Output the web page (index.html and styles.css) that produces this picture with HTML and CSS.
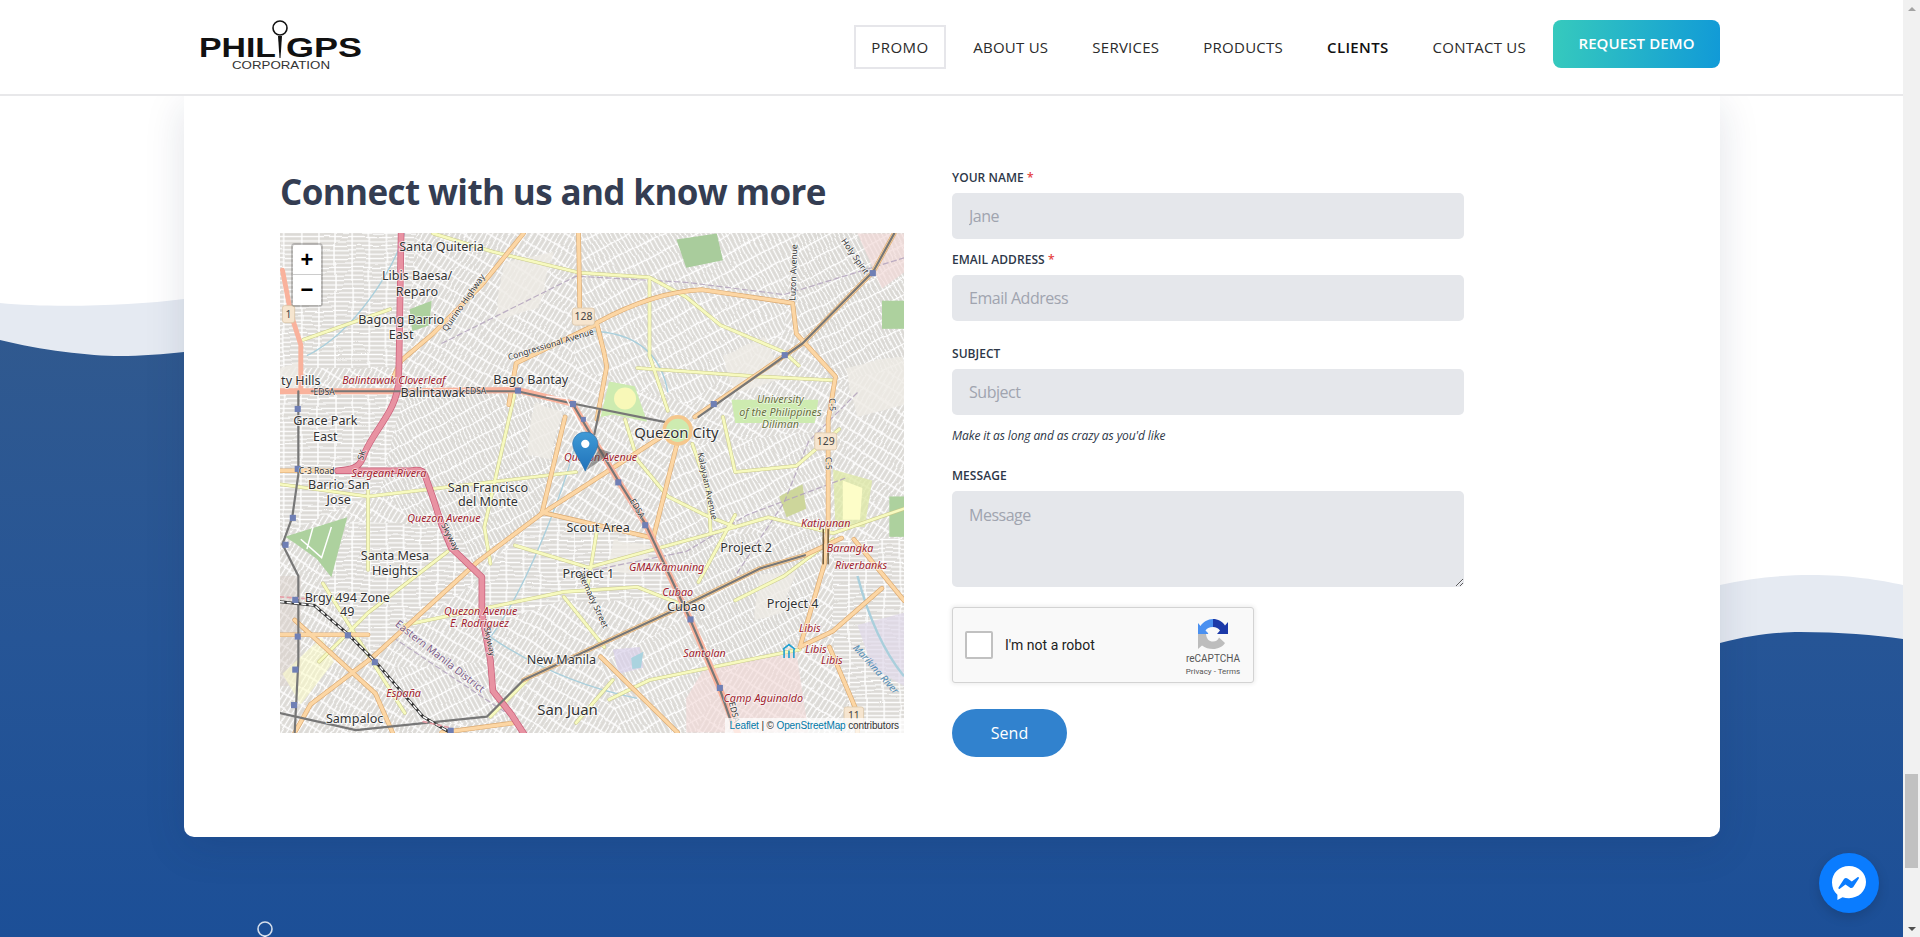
FILE: index.html
```html
<!DOCTYPE html>
<html lang="en">
<head>
<meta charset="utf-8">
<title>PhilGPS Corporation</title>
<link rel="stylesheet" href="styles.css">
</head>
<body>
<div class="window">
  <div class="page">
    <svg class="waves" viewBox="0 0 1903 937" preserveAspectRatio="none" aria-hidden="true">
      <defs>
        <linearGradient id="blue" x1="0" y1="0" x2="0" y2="1">
          <stop offset="0" stop-color="#30598f"/>
          <stop offset="0.5" stop-color="#265596"/>
          <stop offset="1" stop-color="#1c4f97"/>
        </linearGradient>
      </defs>
      <path fill="#e5eaf2" d="M0 303C50 308 130 306 184 299L1720 585C1750 578 1785 575 1810 575C1850 575 1880 580 1903 585V937H0Z"/>
      <path fill="url(#blue)" d="M0 340C40 350 90 356 120 356C140 356 165 354 184 352L1720 643C1750 635 1780 632 1800 632C1840 632 1875 635 1903 639V937H0Z"/>
    </svg>

    <header class="header">
      <a class="logo" href="#">
        <svg width="170" height="60" viewBox="0 0 170 60">
          <text x="0" y="47" class="logo-word" textLength="77" lengthAdjust="spacingAndGlyphs">PHIL</text>
          <circle cx="81" cy="18" r="7" fill="#fff" stroke="#111" stroke-width="1.600"/>
          <path d="M79 26H83L81.500 48H80.500Z" fill="#111"/>
          <text x="87" y="47" class="logo-word" textLength="76" lengthAdjust="spacingAndGlyphs">GPS</text>
          <text x="33" y="59" class="logo-sub" textLength="98" lengthAdjust="spacingAndGlyphs">CORPORATION</text>
        </svg>
      </a>
      <nav class="nav">
        <a class="nav-item nav-boxed" href="#">PROMO</a>
        <a class="nav-item" href="#">ABOUT US</a>
        <a class="nav-item" href="#">SERVICES</a>
        <a class="nav-item" href="#">PRODUCTS</a>
        <a class="nav-item nav-strong" href="#">CLIENTS</a>
        <a class="nav-item" href="#">CONTACT US</a>
        <a class="demo" href="#">REQUEST DEMO</a>
      </nav>
    </header>

    <main class="card">
      <section class="left">
        <h2 class="title">Connect with us and know more</h2>
        <div class="map">
          <svg class="map-svg" viewBox="228 190 510 408" aria-label="Map of Quezon City">
            <defs>
              <pattern id="s1" width="3.600" height="14" patternUnits="userSpaceOnUse" patternTransform="rotate(90)"><rect width="3.600" height="14" fill="#dcdad6"/><path d="M1.800 0V14M0 7H3.600" stroke="#fff" stroke-width="1.100"/></pattern>
              <pattern id="s2" width="3.800" height="11" patternUnits="userSpaceOnUse" patternTransform="rotate(32)"><rect width="3.800" height="11" fill="#dcdad6"/><path d="M1.900 0V11M0 5.500H3.800" stroke="#fff" stroke-width="1.100"/></pattern>
              <pattern id="s3" width="3.400" height="12" patternUnits="userSpaceOnUse" patternTransform="rotate(-28)"><rect width="3.400" height="12" fill="#dad8d4"/><path d="M1.700 0V12M0 6H3.400" stroke="#fff" stroke-width="1"/></pattern>
              <pattern id="s4" width="13" height="3.600" patternUnits="userSpaceOnUse" patternTransform="rotate(62)"><rect width="13" height="3.600" fill="#dcdad6"/><path d="M0 1.800H13M6 0V3.600" stroke="#fff" stroke-width="1.100"/></pattern>
              <linearGradient id="pin" x1="0" y1="0" x2="0" y2="1"><stop offset="0" stop-color="#3f9ad6"/><stop offset="1" stop-color="#1f72ba"/></linearGradient>
              <filter id="wobble" x="0" y="0" width="100%" height="100%" filterUnits="objectBoundingBox">
                <feTurbulence type="fractalNoise" baseFrequency="0.03" numOctaves="2" seed="7" result="n"/>
                <feDisplacementMap in="SourceGraphic" in2="n" scale="5" xChannelSelector="R" yChannelSelector="G"/>
              </filter>
            </defs>

            <rect x="228" y="190" width="510" height="408" fill="#efece6"/>
            <g filter="url(#wobble)">
              <rect x="220" y="180" width="530" height="430" fill="url(#s2)"/>
              <path fill="url(#s1)" d="M220 180H340L330 300H220Z"/>
              <path fill="url(#s2)" d="M340 180H470L470 300L400 320H330Z"/>
              <path fill="url(#s4)" d="M470 180H650L640 270L560 330L500 310L470 300Z"/>
              <path fill="url(#s3)" d="M650 180H750V300L680 310L650 270Z"/>
              <path fill="url(#s1)" d="M220 320H330L310 400L220 440Z"/>
              <path fill="url(#s3)" d="M330 320H465L442 420L380 470L310 400Z"/>
              <path fill="url(#s2)" d="M465 340L540 360L530 440L440 420Z"/>
              <path fill="url(#s4)" d="M555 365L680 350L675 425L600 430L535 440Z"/>
              <path fill="url(#s2)" d="M680 310H750V430L680 430Z"/>
              <path fill="url(#s1)" d="M285 425L370 430L393 470L305 535L260 480Z"/>
              <path fill="url(#s1)" d="M393 470L440 420L530 440L560 490L460 490L395 510Z"/>
              <path fill="url(#s3)" d="M535 440L680 430L655 525L590 550Z"/>
              <path fill="url(#s2)" d="M395 510L500 490L480 540L420 555L400 540Z"/>
              <path fill="url(#s4)" d="M490 540L570 500L590 560L560 610H510Z"/>
              <path fill="url(#s2)" d="M220 500L300 540L250 610H220Z"/>
              <path fill="url(#s4)" d="M320 545L400 540L415 590L340 590Z"/>
              <path fill="url(#s1)" d="M680 440H750V610H700L680 530Z"/>
              <!-- open land between the built-up streets -->
              <g fill="#efece6" opacity=".8">
                <path d="M410 215L450 205L440 250L405 260Z"/>
                <path d="M590 290L625 275L640 310L600 320Z"/>
                <path d="M436 328L460 335L448 375L430 370Z"/>
                <path d="M690 300L738 290V330L700 340Z"/>
                <path d="M500 440L530 445L525 470L495 465Z"/>
                <path d="M228 300L245 295V318H228Z"/>
                <path d="M620 470L650 465L640 500L615 505Z"/>
              </g>
            </g>

            <!-- land use -->
            <path fill="#d9d0c9" opacity=".5" d="M228 470H245V560H228Z"/>
            <path fill="#f2dad9" opacity=".65" d="M575 545L650 532L660 598H560L560 570Z"/>
            <path fill="#f2dad9" opacity=".7" d="M700 190H738V222L720 235Z"/>
            <path fill="#a9cc9c" d="M552 195L585 190L590 212L560 218Z"/>
            <path fill="#add19e" d="M334 252L352 245L350 265L336 270Z"/>
            <path fill="#add19e" d="M720 245H738V268H720Z"/>
            <path fill="#add19e" d="M726 405H738V438H726Z"/>
            <path fill="#add19e" d="M232 438L283 422L270 471L258 456L240 443Z"/>
            <path fill="none" stroke="#fff" stroke-width="1.200" d="M245 440L262 455L270 430M255 430L250 448"/>
            <path fill="#cdebb0" d="M497 311L518 315L528 344L500 338L490 340Z"/>
            <ellipse cx="510" cy="325" rx="9" ry="9" fill="#f8f8b8"/>
            <path fill="#cdebb0" d="M597 326L668 326L665 345L600 345Z"/>
            <path fill="#dfe9a8" opacity=".8" d="M680 383L712 392L706 430L682 430Z"/>
            <path fill="#fdfdc8" d="M688 392L704 398L702 424L688 424Z"/>
            <path fill="#cdd69b" d="M636 405L655 395L658 415L642 422Z"/>
            <path fill="#d8d0ea" opacity=".7" d="M500 530L522 528L525 545L505 550Z"/>
            <path fill="#e0d8ea" opacity=".7" d="M700 510L738 500V560L712 545Z"/>
            <path fill="#fdfdc8" opacity=".55" d="M230 550L262 520L272 540L245 575Z"/>
            <path fill="#aad3df" d="M515 537L525 532L523 545L516 546Z"/>

            <!-- water -->
            <g fill="none" stroke="#a9cfdc" stroke-width="1.100">
              <path d="M330 190C320 220 290 270 250 290"/>
              <path d="M480 270C520 270 540 290 545 320"/>
              <path d="M470 360C460 400 430 480 400 520C430 540 470 560 520 570"/>
              <path d="M700 470C708 500 720 530 738 552" stroke-width="2"/>
            </g>
            <g fill="none" stroke="#b3a3bd" stroke-width="1" opacity=".85" stroke-dasharray="5 2">
              <path d="M360 280L470 225L560 230L640 240L738 210"/>
              <path d="M320 520L425 590"/>
              <path d="M470 468L560 450L610 420L690 390"/>
              <path d="M700 320L660 360L640 410L600 470"/>
            </g>

            <!-- yellow streets -->
            <g fill="none" stroke-linecap="round" stroke-linejoin="round">
              <g stroke="#c9c98a" stroke-width="3">
                <path id="y1" d="M353 190L402 205L472 222L530 226L560 242L588 265L640 287L652 298"/>
                <path id="y2" d="M247 277L318 252"/>
                <path id="y3" d="M530 228L530 290L545 335"/>
                <path id="y4" d="M510 342L520 375L545 405L575 420L600 430L627 422L680 435L738 415"/>
                <path id="y5" d="M565 362L578 400L580 435"/>
                <path id="y6" d="M420 445L480 463L600 430"/>
                <path id="y7" d="M487 433L479 481"/>
                <path id="y8" d="M330 510L460 483L520 479L553 492"/>
                <path id="y9" d="M460 487L493 528"/>
                <path id="y10" d="M497 571L530 555L653 530"/>
                <path id="y11" d="M420 320L395 430L400 460"/>
                <path id="y12" d="M263 476L330 582"/>
                <path id="y13" d="M228 395L300 405L470 385"/>
                <path id="y14" d="M570 475L600 420M600 490L640 470L680 440"/>
                <path id="y15" d="M590 340L600 385L650 380L685 350"/>
                <path id="y16" d="M520 300L620 307L680 310"/>
                <path id="y17" d="M300 400L300 465M365 450L300 500L260 540"/>
                <path id="y18" d="M430 555L400 585M470 590L500 555"/>
              </g>
              <g stroke="#f7fabf" stroke-width="2.200">
                <use href="#y1"/><use href="#y2"/><use href="#y3"/><use href="#y4"/><use href="#y5"/><use href="#y6"/><use href="#y7"/><use href="#y8"/><use href="#y9"/><use href="#y10"/><use href="#y11"/><use href="#y12"/><use href="#y13"/><use href="#y14"/><use href="#y15"/><use href="#y16"/><use href="#y17"/><use href="#y18"/>
              </g>

              <!-- orange primary -->
              <g stroke="#dba970" stroke-width="3.800">
                <path id="o1" d="M427 190L393 232L353 272L327 294L320 309"/>
                <path id="o2" d="M472 190L473 250"/>
                <path id="o3" d="M415 330L421 296L487 264L493 288L495 299L487 342"/>
                <path id="o4" d="M487 263C520 245 550 237 573 236L647 247L650 272L682 307L676 343L676 425L673 460L653 528"/>
                <path id="o5" d="M461 340L442 419"/>
                <path id="o6" d="M552 364L533 439"/>
                <path id="o7" d="M442 418L533 439"/>
                <path id="o8" d="M540 356L442 419L390 458L303 537L253 575L240 598"/>
                <path id="o9" d="M567 340L655 280L713 221L730 190"/>
                <path id="o10" d="M427 555L563 492L620 464L657 453L687 439"/>
                <path id="o11" d="M490 536L553 598"/>
                <path id="o12" d="M677 528L700 582V598"/>
                <path id="o13" d="M697 440L738 490"/>
                <path id="o14" d="M240 506L306 566L320 598"/>
                <path id="o15" d="M228 384H270"/>
                <path id="o16" d="M653 528L680 515L720 480"/>
                <path id="o17" d="M228 518H300M360 598L420 590"/>
              </g>
              <g stroke="#fcd6a4" stroke-width="2.800">
                <use href="#o1"/><use href="#o2"/><use href="#o3"/><use href="#o4"/><use href="#o5"/><use href="#o6"/><use href="#o7"/><use href="#o8"/><use href="#o9"/><use href="#o10"/><use href="#o11"/><use href="#o12"/><use href="#o13"/><use href="#o14"/><use href="#o15"/><use href="#o16"/><use href="#o17"/>
              </g>

              <!-- trunk -->
              <path stroke="#f9b29c" stroke-width="5" d="M228 319H330L422 318L467 329L505 393L527 428L563 505L587 561L600 594L603 600"/>
              <path stroke="#f9b29c" stroke-width="4" d="M230 220L237 256L245 281V319"/>

              <!-- motorway -->
              <path stroke="#c9607a" stroke-width="5.400" d="M327 190L325 310C324 335 305 350 297 370C294 380 290 383 275 384H335C346 382 346 386 348 392L353 406L360 428L368 447L393 471L393 501L400 539L402 564L417 583L428 600"/>
              <path stroke="#e892a2" stroke-width="4.200" d="M327 190L325 310C324 335 305 350 297 370C294 380 290 383 275 384H335C346 382 346 386 348 392L353 406L360 428L368 447L393 471L393 501L400 539L402 564L417 583L428 600"/>

              <!-- grey rail lines -->
              <g stroke="#777" stroke-width="1.800">
                <path d="M254 319H422L467 329L505 393L527 428L563 505L587 561L597 590"/>
                <path d="M467 329L542 344"/>
                <path d="M570 340L655 280L713 221L730 190"/>
                <path d="M427 555L563 492L620 464L657 453"/>
                <path d="M228 582L290 596L397 585L427 555"/>
                <path d="M243 319V387L238 422L230 444L243 470L243 540L240 598"/>
                <path d="M489 335L485 354"/>
              </g>
              <path stroke="#fff" stroke-width="1.200" d="M446 323L462 325L478 356" opacity=".9"/>
              <path stroke="#333" stroke-width="2.400" d="M228 491L256 494L284 518L306 540L345 585L367 598"/>
              <path stroke="#fff" stroke-width="1.200" stroke-dasharray="3 3" d="M228 491L256 494L284 518L306 540L345 585L367 598"/>
              <path stroke="#e6a0a8" stroke-width="1.400" stroke-dasharray="3 3" d="M228 487L256 489M345 589L367 594"/>
              <path stroke="#6f5a3c" stroke-width="1.200" d="M672 432V460M676 432V460"/>
            </g>

            <!-- Quezon circle -->
            <circle cx="553" cy="351" r="11" fill="#cdebb0" stroke="#f5c78d" stroke-width="3"/>

            <!-- stations -->
            <g fill="#6f7fb5">
              <rect x="420" y="316" width="5" height="5"/><rect x="465" y="327" width="5" height="5"/><rect x="474" y="340" width="4" height="4"/><rect x="502" y="391" width="5" height="5"/>
              <rect x="524" y="426" width="5" height="5"/><rect x="561" y="503" width="5" height="5"/><rect x="585" y="559" width="5" height="5"/><rect x="240" y="331" width="5" height="5"/>
              <rect x="240" y="380" width="5" height="5"/><rect x="236" y="420" width="5" height="5"/><rect x="230" y="442" width="5" height="5"/><rect x="238" y="487" width="5" height="5"/>
              <rect x="240" y="517" width="5" height="5"/><rect x="238" y="544" width="5" height="5"/><rect x="237" y="573" width="5" height="5"/><rect x="281" y="516" width="5" height="5"/>
              <rect x="303" y="538" width="5" height="5"/><rect x="365" y="594" width="5" height="5"/><rect x="638" y="287" width="5" height="5"/><rect x="580" y="327" width="5" height="5"/><rect x="710" y="220" width="5" height="5"/>
            </g>

            <!-- shields -->
            <g class="shield">
              <rect x="467" y="251" width="18" height="14" rx="2"/><rect x="665" y="353" width="18" height="14" rx="2"/><rect x="230" y="249" width="10" height="14" rx="2" fill="#f3d4c4"/><rect x="689" y="577" width="16" height="14" rx="2"/>
            </g>
            <g class="shield-text">
              <text x="476" y="261">128</text><text x="674" y="363">129</text><text x="235" y="259">1</text><text x="697" y="587">11</text>
            </g>

            <!-- place labels -->
            <g class="place">
              <text x="360" y="204">Santa Quiteria</text>
              <text x="340" y="228">Libis Baesa/</text><text x="340" y="241">Reparo</text>
              <text x="327" y="264">Bagong Barrio</text><text x="327" y="276">East</text>
              <text x="245" y="314">ty Hills</text>
              <text x="353" y="324">Balintawak</text>
              <text x="433" y="313">Bago Bantay</text>
              <text x="265" y="347">Grace Park</text><text x="265" y="360">East</text>
              <text x="276" y="399">Barrio San</text><text x="276" y="411">Jose</text>
              <text x="398" y="401">San Francisco</text><text x="398" y="413">del Monte</text>
              <text x="322" y="457">Santa Mesa</text><text x="322" y="469">Heights</text>
              <text x="488" y="434">Scout Area</text>
              <text x="609" y="450">Project 2</text>
              <text x="480" y="472">Project 1</text>
              <text x="560" y="499">Cubao</text>
              <text x="647" y="496">Project 4</text>
              <text x="283" y="491">Brgy 494 Zone</text><text x="283" y="503">49</text>
              <text x="458" y="542">New Manila</text>
              <text x="289" y="590">Sampaloc</text>
              <text class="place-l" x="552" y="357">Quezon City</text>
              <text class="place-l" x="463" y="584">San Juan</text>
            </g>
            <g class="uni">
              <text x="637" y="329">University</text><text x="637" y="339">of the Philippines</text><text x="637" y="349">Diliman</text>
            </g>
            <g class="station">
              <text x="321" y="313">Balintawak Cloverleaf</text>
              <text x="317" y="389">Sergeant Rivera</text>
              <text x="490" y="376">Quezon Avenue</text>
              <text x="362" y="426">Quezon Avenue</text>
              <text x="392" y="502">Quezon Avenue</text><text x="391" y="512">E. Rodriguez</text>
              <text x="674" y="430">Katipunan</text>
              <text x="694" y="450">Barangka</text>
              <text x="703" y="464">Riverbanks</text>
              <text x="544" y="466">GMA/Kamuning</text>
              <text x="553" y="486">Cubao</text>
              <text x="661" y="516">Libis</text><text x="666" y="533">Libis</text><text x="679" y="542">Libis</text>
              <text x="575" y="536">Santolan</text>
              <text x="623" y="573">Camp Aguinaldo</text>
              <text x="329" y="569">España</text>
            </g>
            <g class="road">
              <text x="264" y="322">EDSA</text>
              <text x="388" y="321">EDSA</text>
              <text x="258" y="387">C-3 Road</text>
              <text transform="translate(450 283) rotate(-17)">Congressional Avenue</text>
              <text transform="translate(380 248) rotate(-55)">Quirino Highway</text>
              <text transform="translate(650 222) rotate(-88)">Luzon Avenue</text>
              <text transform="translate(696 210) rotate(55)">Holy Spirit</text>
              <text transform="translate(575 397) rotate(78)">Kalayaan Avenue</text>
              <text transform="translate(518 416) rotate(60)">EDSA</text>
              <text transform="translate(365 439) rotate(62)">Skyway</text>
              <text transform="translate(397 524) rotate(78)">Skyway</text>
              <text transform="translate(482 491) rotate(65)">Hemady Street</text>
              <text transform="translate(597 582) rotate(75)">EDSA</text>
              <text transform="translate(297 372) rotate(-70)">SK</text>
              <text transform="translate(674 378) rotate(88)">C-5</text>
              <text transform="translate(677 330) rotate(88)">C-5</text>
            </g>
            <text class="district" transform="translate(357 538) rotate(38)">Eastern Manila District</text>
            <text class="river" transform="translate(713 548) rotate(48)">Marikina River</text>

            <!-- Transit icon -->
            <g fill="none" stroke="#1f9fd0" stroke-width="1.300">
              <path d="M639 530L644 526L649 530M640 530V537M648 530V537M644 531V537"/>
            </g>

            <!-- marker -->
            <path d="M478 384L499 369L489 366Z" fill="#555" opacity=".55"/>
            <path d="M477.500 352.400C470.700 352.400 467.200 357.700 467.200 362C467.200 367.600 473.500 375 477.500 384.300C481.500 375 487.800 367.600 487.800 362C487.800 357.700 484.300 352.400 477.500 352.400Z" fill="url(#pin)" stroke="#2a6fa8" stroke-width=".5"/>
            <circle cx="477.500" cy="362" r="3.400" fill="#fff"/>
          </svg>
          <div class="zoom-ctl">
            <a class="zoom-btn zoom-btn-top" href="#">+</a>
            <a class="zoom-btn" href="#">−</a>
          </div>
          <div class="attrib"><a href="#">Leaflet</a> | © <a href="#">OpenStreetMap</a> contributors</div>
        </div>
      </section>

      <form class="form">
        <label class="field-label">YOUR NAME <span class="req">*</span></label>
        <input class="input" type="text" placeholder="Jane">
        <label class="field-label label-email">EMAIL ADDRESS <span class="req">*</span></label>
        <input class="input" type="text" placeholder="Email Address">
        <label class="field-label label-subject">SUBJECT</label>
        <input class="input" type="text" placeholder="Subject">
        <p class="hint">Make it as long and as crazy as you'd like</p>
        <label class="field-label label-message">MESSAGE</label>
        <textarea class="input textarea" placeholder="Message"></textarea>
        <div class="captcha">
          <span class="captcha-box"></span>
          <span class="captcha-text">I'm not a robot</span>
          <div class="captcha-brand">
            <svg width="30" height="30" viewBox="0 0 30 30">
              <path fill="#4a90f0" d="M15 0C10 0 5 3 2.500 7L0 4V15H11L7.500 11.500C9 9.500 11 8 15 8Z"/>
              <path fill="#1c3aa9" d="M15 0V8C18 8 20.500 9.500 22 11.500L19 15H30V3L27 6.500C24.500 2.500 20 0 15 0Z"/>
              <path fill="#bdbdbd" d="M0 15V30L4 26.500C7 29 11 30 15 30C20 30 25 27.500 27 24L21 18.500C20 21 18 22.500 15 22.500C11 22.500 8.500 20 8 15Z"/>
              <circle cx="14" cy="13" r="4" fill="#f9f9f9"/>
            </svg>
            <span class="captcha-name">reCAPTCHA</span>
            <span class="captcha-links">Privacy - Terms</span>
          </div>
        </div>
        <button class="send" type="button">Send</button>
      </form>
    </main>

    <footer class="footer">
      <svg class="footer-pin" width="18" height="20" viewBox="0 0 18 20" aria-hidden="true">
        <circle cx="9" cy="8" r="7" fill="none" stroke="#d5deeb" stroke-width="1.600"/>
        <path d="M7.500 15H10.500L10 20H8Z" fill="#e8edf5"/>
      </svg>
    </footer>

    <a class="messenger" href="#" aria-label="Messenger">
      <svg width="36" height="36" viewBox="0 0 36 36">
        <path fill="#fff" d="M18 1C8.400 1 1 8 1 17.500C1 22.500 3 26.800 6.400 29.700V35L11.500 32.200C13.500 32.800 15.700 33.200 18 33.200C27.600 33.200 35 26.200 35 17.100C35 8 27.600 1 18 1Z"/>
        <path fill="#0a7cff" d="M7.500 22.500L13 14C13.800 12.800 15.400 12.500 16.500 13.400L20.800 16.600L26.500 12.300C27.300 11.700 28.300 12.600 27.800 13.500L22.300 22C21.500 23.200 19.900 23.500 18.800 22.600L14.500 19.400L8.800 23.700C8 24.300 7 23.400 7.500 22.500Z"/>
      </svg>
    </a>
  </div>

  <aside class="scrollbar" aria-hidden="true">
    <span class="arrow arrow-up"></span>
    <div class="track"><span class="thumb"></span></div>
    <span class="arrow arrow-down"></span>
  </aside>
</div>
</body>
</html>
```
FILE: styles.css
```css
* { box-sizing: border-box; }
html, body { margin: 0; height: 937px; overflow: hidden; background: #fff; }
body { font-family: "Open Sans", "Noto Sans", sans-serif; color: #2d3748; }
a { text-decoration: none; color: inherit; }

.window { display: flex; width: 1920px; height: 937px; }
.page { position: relative; flex: 1; min-width: 0; height: 937px; overflow: hidden; background: #fff; }
.waves { position: absolute; left: 0; top: 0; width: 100%; height: 937px; }

/* header */
.header {
  position: relative; z-index: 3; height: 96px; background: #fff;
  border-bottom: 2px solid #e8e8ea;
  display: flex; align-items: flex-start; justify-content: space-between;
  padding: 0 183px 0 199px;
}
.logo { display: block; margin-top: 10px; height: 60px; }
.logo svg { display: block; }
.logo-word { font: 700 27px "Liberation Sans", sans-serif; fill: #111; }
.logo-sub { font: 400 11px "Liberation Sans", sans-serif; fill: #333; }
.nav { display: flex; align-items: flex-start; padding-top: 20px; }
.nav-item {
  margin: 5px 5px 0; padding: 0 15px; height: 44px; border: 2px solid transparent;
  font-size: 15px; line-height: 41px; color: #2a2a2a; font-weight: 400; white-space: nowrap; letter-spacing: .25px;
}
.nav-boxed { border-color: #e6e6ea; margin-left: 0; padding: 0 15.500px; letter-spacing: .5px; }
.nav-strong { font-weight: 600; color: #111; letter-spacing: .35px; }
.demo {
  display: block; width: 167px; height: 48px; border-radius: 8px; margin-left: 5px;
  background: linear-gradient(95deg, #36cabd, #119ad7);
  color: #fff; font-weight: 600; font-size: 15px; line-height: 46px; text-align: center; letter-spacing: .1px;
}

/* card */
.card {
  position: relative; z-index: 2; width: 1536px; height: 741px; margin-left: 184px; background: #fff;
  border-radius: 0 0 10px 10px; box-shadow: 0 10px 40px rgba(20, 40, 80, .13);
  display: flex; gap: 48px; padding: 0 0 0 96px;
}
.left { width: 624px; display: flex; flex-direction: column; }
.title { margin: 67px 0 0; height: 70px; font-size: 35px; line-height: 57px; font-weight: 700; color: #343d52; white-space: nowrap; letter-spacing: -.62px; }
.map { position: relative; width: 624px; height: 500px; overflow: hidden; background: #ece9e3; }
.map-svg { display: block; width: 624px; height: 500px; }

.shield rect { fill: #f6e5cf; stroke: #d8c3a3; stroke-width: .6; }
.shield-text text { font: 400 8.500px "Noto Sans", sans-serif; fill: #444; text-anchor: middle; }
.place text { font: 400 10.300px "Noto Sans", sans-serif; fill: #333; text-anchor: middle; paint-order: stroke; stroke: #fff; stroke-width: 1.500px; stroke-opacity: .75; }
.place .place-l { font-size: 12.200px; }
.uni text { font: italic 400 8.800px "Noto Sans", sans-serif; fill: #68703e; text-anchor: middle; paint-order: stroke; stroke: #fff; stroke-width: 1.200px; stroke-opacity: .6; }
.station text { font: italic 400 8.800px "Noto Sans", sans-serif; fill: #a01d2e; text-anchor: middle; paint-order: stroke; stroke: #fff; stroke-width: 1.200px; stroke-opacity: .7; }
.road text { font: 400 7px "Noto Sans", sans-serif; fill: #333; text-anchor: middle; paint-order: stroke; stroke: #fff; stroke-width: 1px; stroke-opacity: .7; }
.district { font: 400 8.500px "Noto Sans", sans-serif; fill: #7b5c86; text-anchor: middle; paint-order: stroke; stroke: #fff; stroke-width: 1px; stroke-opacity: .6; }
.river { font: italic 400 8px "Noto Sans", sans-serif; fill: #4f8bb5; text-anchor: middle; }

.zoom-ctl {
  position: absolute; left: 11px; top: 10px; width: 32px; border: 2px solid rgba(0, 0, 0, .2);
  border-radius: 4px; background-clip: padding-box;
}
.zoom-btn {
  display: block; height: 30px; background: #fff; color: #000; text-align: center;
  font: 700 22px/30px "Liberation Sans", sans-serif;
}
.zoom-btn-top { border-bottom: 1px solid #ccc; border-radius: 2px 2px 0 0; }
.attrib {
  position: absolute; right: 0; bottom: 0; padding: 0 5px; background: rgba(255, 255, 255, .7);
  font: 400 10px/15px "Liberation Sans", sans-serif; color: #333; letter-spacing: -.12px;
}
.attrib a { color: #0078a8; }

/* form */
.form { width: 512px; padding-top: 69px; display: flex; flex-direction: column; align-items: flex-start; }
.field-label { display: block; height: 28px; font-size: 12px; line-height: 26px; font-weight: 600; color: #2d3748; letter-spacing: .05px; white-space: nowrap; }
.label-email { height: 36px; line-height: 42px; margin-top: 0; }
.label-subject { margin-top: 20px; height: 28px; }
.label-message { margin-top: 15px; height: 28px; }
.req { color: #e53e3e; }
.input {
  display: block; width: 512px; height: 46px; border: 0; border-radius: 5px; outline: 0;
  background: #e5e7eb; padding: 0 17px; font: 400 16px "Open Sans", sans-serif; color: #2d3748; letter-spacing: -.48px;
}
.input::placeholder { color: #a0a4af; opacity: 1; }
.textarea { height: 96px; padding-top: 12px; line-height: 24px; resize: vertical; }
.hint { margin: 13px 0 0; height: 20px; font-size: 12px; line-height: 16px; font-style: italic; color: #2d3748; white-space: nowrap; letter-spacing: -.1px; font-weight: 400; }

.captcha {
  position: relative; width: 302px; height: 76px; margin-top: 20px; background: #f9f9f9;
  border: 1px solid #d3d3d3; border-radius: 3px; box-shadow: 0 0 4px 1px rgba(0, 0, 0, .08);
  display: flex; align-items: center; padding-left: 12px;
}
.captcha-box { width: 28px; height: 28px; background: #fff; border: 2px solid #c1c1c1; border-radius: 2px; }
.captcha-text { margin-left: 12px; font: 400 14px "Roboto", sans-serif; color: #222; }
.captcha-brand {
  position: absolute; right: 11px; top: 11px; width: 58px; display: flex; flex-direction: column; align-items: center;
}
.captcha-name { margin-top: 4px; font: 400 10px/12px "Roboto", sans-serif; color: #555; }
.captcha-links { margin-top: 2px; font: 400 8px/10px "Roboto", sans-serif; color: #555; white-space: nowrap; }
.send {
  width: 115px; height: 48px; margin-top: 26px; border: 0; border-radius: 24px; background: #3182ce;
  color: #fff; font: 400 16px "Open Sans", sans-serif;
}

/* footer */
.footer { position: relative; z-index: 1; padding: 84px 0 0 256px; }
.footer-pin { display: block; }

/* messenger */
.messenger {
  position: absolute; z-index: 4; right: 24px; bottom: 24px; width: 60px; height: 60px; border-radius: 50%;
  background: #0a7cff; box-shadow: 0 4px 12px rgba(0, 0, 0, .15);
  display: flex; align-items: center; justify-content: center;
}
.messenger svg { display: block; }

/* scrollbar */
.scrollbar { width: 17px; height: 937px; background: #f1f1f1; display: flex; flex-direction: column; }
.arrow { display: flex; width: 17px; height: 17px; flex: none; align-items: center; justify-content: center; }
.arrow::before { content: ""; width: 0; height: 0; border-left: 4px solid transparent; border-right: 4px solid transparent; }
.arrow-up::before { border-bottom: 4px solid #a3a3a3; }
.arrow-down::before { border-top: 4px solid #505050; }
.track { flex: 1; padding-top: 757px; }
.thumb { display: block; width: 13px; height: 94px; margin-left: 2px; background: #c1c1c1; }
```
